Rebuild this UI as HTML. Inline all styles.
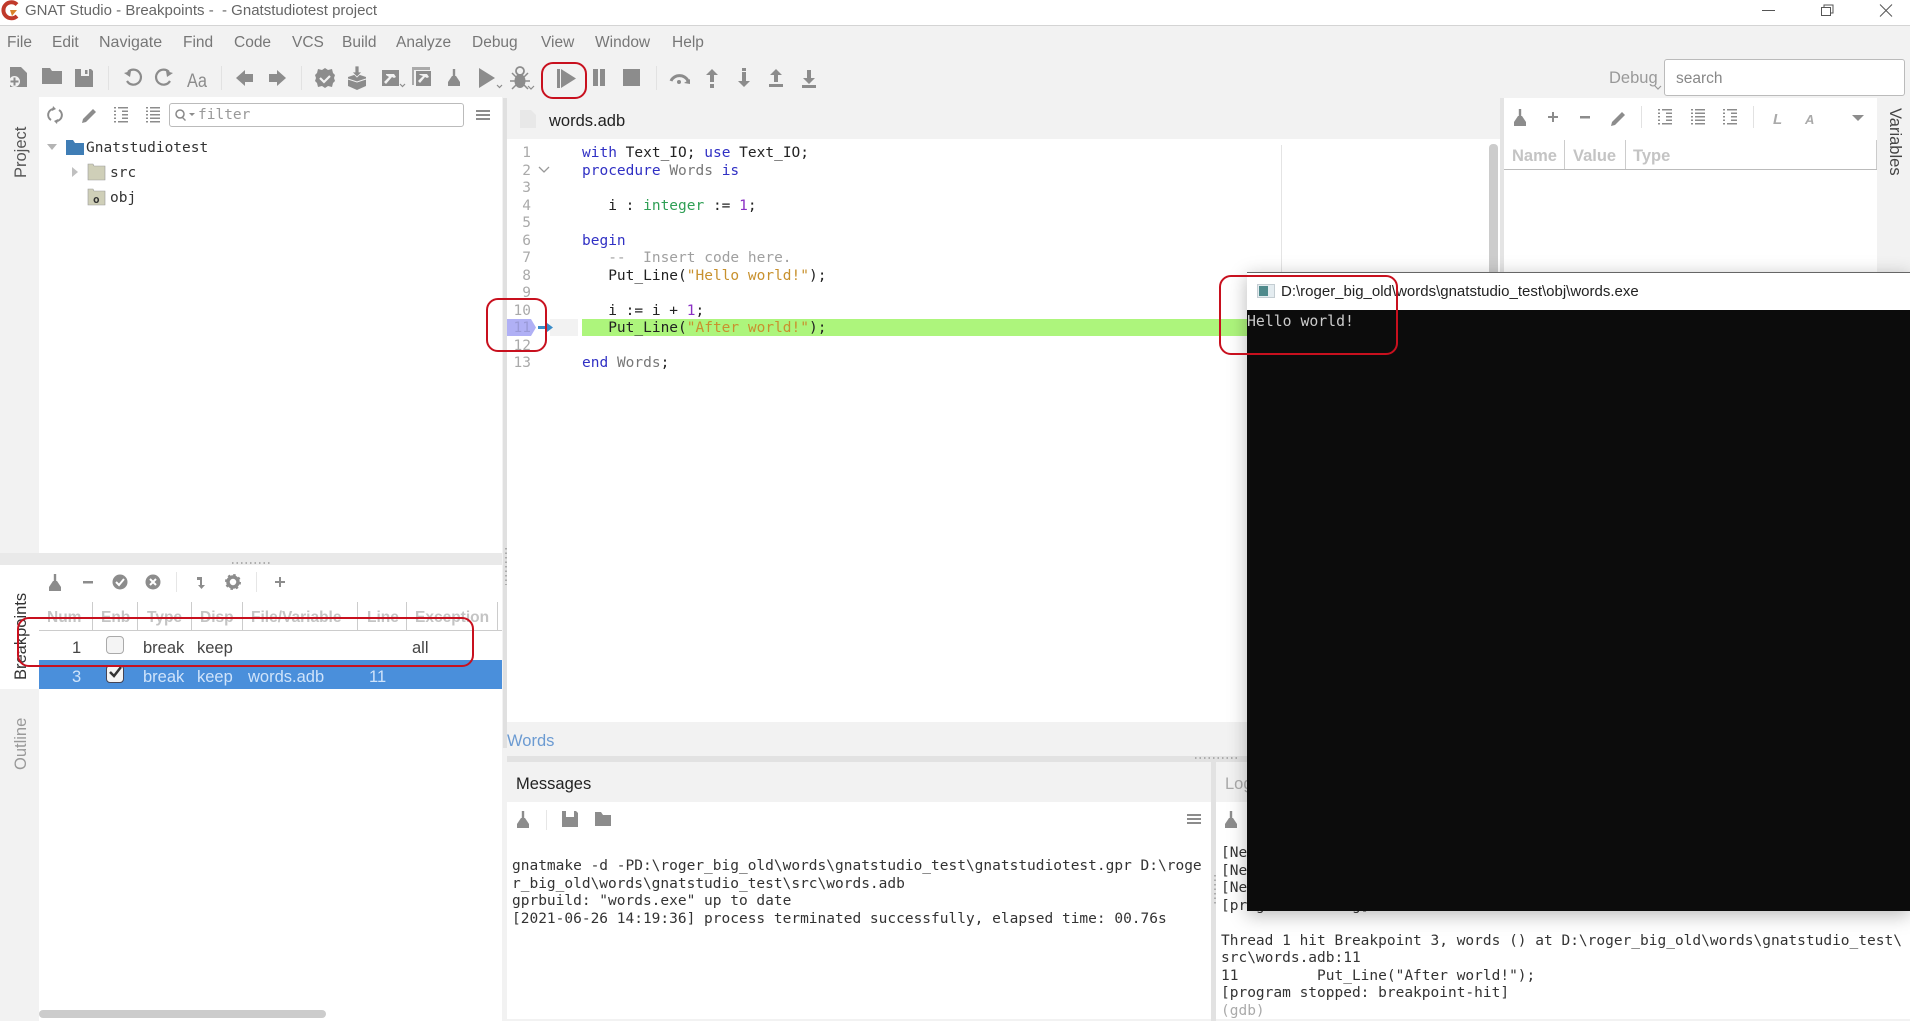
<!DOCTYPE html>
<html><head><meta charset="utf-8"><title>GNAT Studio</title>
<style>
html,body{margin:0;padding:0;background:#f2f2f2;width:1910px;height:1021px;overflow:hidden}
#w{position:relative;width:1910px;height:1021px;overflow:hidden;filter:blur(.35px);font-family:"Liberation Sans",sans-serif}
.b{position:absolute}
.t{position:absolute;white-space:pre;line-height:20px;height:20px;font-size:15.5px;color:#777}
.m{font-family:"DejaVu Sans Mono",monospace;font-size:14.5px;color:#333}
.h{font-weight:bold;font-size:15.5px;color:#c4c4c4}
pre{position:absolute;margin:0;font-family:"DejaVu Sans Mono",monospace;font-size:14.5px;line-height:17.5px;color:#222}
.k{color:#3030c4}.s{color:#c8912e}.n{color:#8a2fc4}.g{color:#2f9f55}.c{color:#a0a0a0}.i{color:#777}
.r{position:absolute;border:2px solid #c8101e;border-radius:12px;box-sizing:border-box}
.v{position:absolute;white-space:pre;line-height:20px;height:20px;font-size:16.5px;transform-origin:0 0}
</style></head><body><div id="w">
<!-- title -->
<div class="b" style="left:0;top:0;width:1910px;height:25px;background:#fff;border-bottom:1px solid #d4d4d4"></div>
<svg class="b" style="left:0;top:0" width="20" height="22" viewBox="0 0 20 22"><path d="M17 4.500A8 8 0 1 0 17 16" fill="none" stroke="#c0392b" stroke-width="4"/><path d="M10 10h7l-5 6z" fill="#d9822b"/></svg>
<div class="t" style="left:25px;top:1px;font-size:15px;color:#666">GNAT Studio - Breakpoints -  - Gnatstudiotest project</div>
<svg class="b" style="left:1750px;top:0" width="160" height="22" fill="none" stroke="#555" stroke-width="1"><path d="M12 10.500h13"/><path d="M71.500 7.500h9v8h-9zM74 7.500v-2.500h9v8h-2.500"/><path d="M130 4.500l12 12M142 4.500l-12 12"/></svg>
<!-- menu -->
<div class="t" style="left:7px;top:33px">File</div>
<div class="t" style="left:52px;top:33px">Edit</div>
<div class="t" style="left:99px;top:33px;font-size:16px">Navigate</div>
<div class="t" style="left:183px;top:33px">Find</div>
<div class="t" style="left:234px;top:33px">Code</div>
<div class="t" style="left:292px;top:33px">VCS</div>
<div class="t" style="left:342px;top:33px">Build</div>
<div class="t" style="left:396px;top:33px">Analyze</div>
<div class="t" style="left:472px;top:33px">Debug</div>
<div class="t" style="left:541px;top:33px">View</div>
<div class="t" style="left:595px;top:33px">Window</div>
<div class="t" style="left:672px;top:33px">Help</div>
<!-- panels -->
<div class="b" style="left:39px;top:97px;width:463px;height:456px;background:#fff"></div>
<div class="b" style="left:0;top:553px;width:502px;height:12px;background:#e9e9e9"></div>
<div class="b" style="left:0;top:565px;width:39px;height:124px;background:#fff"></div>
<div class="b" style="left:39px;top:565px;width:463px;height:456px;background:#fff"></div>
<div class="b" style="left:503px;top:98px;width:4px;height:650px;background:#e0e0e0"></div>
<div class="b" style="left:507px;top:139px;width:993px;height:583px;background:#fff"></div>
<div class="b" style="left:1489px;top:144px;width:9px;height:140px;background:#ccc;border-radius:4px"></div>
<div class="b" style="left:1500px;top:98px;width:4px;height:180px;background:#e4e4e4"></div>
<div class="b" style="left:1504px;top:98px;width:373px;height:180px;background:#fff"></div>
<div class="b" style="left:1281px;top:145px;width:1px;height:130px;background:#e4e4e4"></div>
<div class="b" style="left:507px;top:756px;width:1403px;height:6px;background:#e2e2e2"></div>
<div class="b" style="left:507px;top:802px;width:704px;height:217px;background:#fff"></div>
<div class="b" style="left:1211px;top:762px;width:5px;height:259px;background:#e2e2e2"></div>
<div class="b" style="left:1216px;top:802px;width:694px;height:217px;background:#fff"></div>
<div class="b" style="left:39px;top:1010px;width:287px;height:8px;background:#ccc;border-radius:4px"></div>
<!-- side labels -->
<div class="v" style="left:11px;top:178px;transform:rotate(-90deg);color:#555">Project</div>
<div class="v" style="left:11px;top:680px;transform:rotate(-90deg);color:#333">Breakpoints</div>
<div class="v" style="left:11px;top:770px;transform:rotate(-90deg);color:#999">Outline</div>
<div class="v" style="left:1905px;top:108px;transform:rotate(90deg);color:#444">Variables</div>
<!-- project tree -->
<div class="b" style="left:169px;top:103px;width:295px;height:24px;box-sizing:border-box;background:#fff;border:1px solid #bbb;border-radius:3px"></div>
<div class="t m" style="left:198px;top:105px;color:#999">filter</div>
<div class="t m" style="left:86px;top:138px">Gnatstudiotest</div>
<div class="t m" style="left:110px;top:163px">src</div>
<div class="t m" style="left:110px;top:188px">obj</div>
<!-- editor -->
<div class="t" style="left:549px;top:111px;font-size:16.5px;color:#222">words.adb</div>
<div class="b" style="left:582px;top:319px;width:665px;height:17px;background:#adf57c"></div>
<div class="b" style="left:550px;top:319px;width:28px;height:17px;background:#f2f2f2"></div>
<svg class="b" style="left:507px;top:319px" width="46" height="17"><path d="M0 0h24l5 8.500-5 8.500H0z" fill="#b0b0f5"/><path d="M31 7h13v3H31z" fill="#3a8cc8"/><path d="M40 4l6 4.500-6 4.500z" fill="#3a8cc8"/></svg>
<pre style="left:507px;top:145px;width:24px;text-align:right;color:#aaa">1
2
3
4
5
6
7
8
9
10
<span style="color:#9a9ad8">11</span>
12
13</pre>
<svg class="b" style="left:538px;top:165px" width="12" height="10" fill="none" stroke="#999" stroke-width="1.300"><path d="M1 2l5 5 5-5"/></svg>
<pre style="left:582px;top:145px"><span class="k">with</span> Text_IO; <span class="k">use</span> Text_IO;
<span class="k">procedure</span> <span class="i">Words</span> <span class="k">is</span>

   i : <span class="g">integer</span> := <span class="n">1</span>;

<span class="k">begin</span>
   <span class="c">--  Insert code here.</span>
   Put_Line(<span class="s">"Hello world!"</span>);

   i := i + <span class="n">1</span>;
   Put_Line(<span class="s">"After world!"</span>);

<span class="k">end</span> <span class="i">Words</span>;</pre>
<!-- right -->
<div class="t" style="left:1609px;top:68px;font-size:16.500px;color:#999">Debug</div>
<div class="b" style="left:1664px;top:59px;width:241px;height:37px;box-sizing:border-box;background:#fff;border:1px solid #bbb;border-radius:3px"></div>
<div class="t" style="left:1676px;top:69px;font-size:15.500px;color:#888">search</div>
<div class="t h" style="left:1512px;top:146px;font-size:16.500px">Name</div>
<div class="t h" style="left:1573px;top:146px;font-size:16.500px">Value</div>
<div class="t h" style="left:1633px;top:146px;font-size:16.500px">Type</div>
<div class="b" style="left:1504px;top:169px;width:373px;height:1px;background:#bbb"></div>
<div class="b" style="left:1564px;top:140px;width:1px;height:29px;background:#ccc"></div>
<div class="b" style="left:1625px;top:140px;width:1px;height:29px;background:#ccc"></div>
<div class="b" style="left:1876px;top:140px;width:1px;height:29px;background:#ccc"></div>
<!-- breakpoints -->
<div class="t h" style="left:47px;top:608px">Num</div>
<div class="t h" style="left:101px;top:608px">Enb</div>
<div class="t h" style="left:147px;top:608px">Type</div>
<div class="t h" style="left:200px;top:608px">Disp</div>
<div class="t h" style="left:251px;top:608px">File/Variable</div>
<div class="t h" style="left:367px;top:608px">Line</div>
<div class="t h" style="left:415px;top:608px">Exception</div>
<div class="b" style="left:39px;top:630px;width:463px;height:1px;background:#ccc"></div>
<div class="b" style="left:92px;top:602px;width:1px;height:28px;background:#ccc"></div>
<div class="b" style="left:137px;top:602px;width:1px;height:28px;background:#ccc"></div>
<div class="b" style="left:191px;top:602px;width:1px;height:28px;background:#ccc"></div>
<div class="b" style="left:242px;top:602px;width:1px;height:28px;background:#ccc"></div>
<div class="b" style="left:357px;top:602px;width:1px;height:28px;background:#ccc"></div>
<div class="b" style="left:406px;top:602px;width:1px;height:28px;background:#ccc"></div>
<div class="b" style="left:497px;top:602px;width:1px;height:28px;background:#ccc"></div>
<div class="b" style="left:39px;top:660px;width:463px;height:29px;background:#4a8fdb"></div>
<div class="t" style="left:72px;top:638px;font-size:16.500px;color:#444">1</div>
<div class="t" style="left:143px;top:638px;font-size:16.500px;color:#444">break</div>
<div class="t" style="left:197px;top:638px;font-size:16.500px;color:#444">keep</div>
<div class="t" style="left:412px;top:638px;font-size:16.500px;color:#444">all</div>
<div class="b" style="left:106px;top:636px;width:18px;height:18px;box-sizing:border-box;background:#f4f4f4;border:1px solid #aaa;border-radius:4px"></div>
<div class="t" style="left:72px;top:667px;font-size:16.500px;color:#cfe3fa">3</div>
<div class="t" style="left:143px;top:667px;font-size:16.500px;color:#cfe3fa">break</div>
<div class="t" style="left:197px;top:667px;font-size:16.500px;color:#cfe3fa">keep</div>
<div class="t" style="left:248px;top:667px;font-size:16.500px;color:#cfe3fa">words.adb</div>
<div class="t" style="left:369px;top:667px;font-size:16.500px;color:#cfe3fa">11</div>
<div class="b" style="left:106px;top:665px;width:18px;height:18px;box-sizing:border-box;background:#f4f4f4;border:1px solid #445;border-radius:4px"></div>
<svg class="b" style="left:106px;top:663px" width="18" height="18" fill="none" stroke="#333" stroke-width="2.500"><path d="M4 9l4 4 7-9"/></svg>
<!-- bottom -->
<div class="t" style="left:507px;top:731px;font-size:16.500px;color:#6c9bd2">Words</div>
<div class="t" style="left:516px;top:774px;font-size:16.500px;color:#222">Messages</div>
<div class="t" style="left:1225px;top:774px;font-size:16.500px;color:#aaa">Log</div>
<pre style="left:512px;top:858px;color:#333">gnatmake -d -PD:\roger_big_old\words\gnatstudio_test\gnatstudiotest.gpr D:\roge
r_big_old\words\gnatstudio_test\src\words.adb
gprbuild: "words.exe" up to date
[2021-06-26 14:19:36] process terminated successfully, elapsed time: 00.76s</pre>
<pre style="left:1221px;top:845px;color:#333">[New
[New
[New
[program running]

Thread 1 hit Breakpoint 3, words () at D:\roger_big_old\words\gnatstudio_test\
src\words.adb:11
11         Put_Line("After world!");
[program stopped: breakpoint-hit]
<span style="color:#aaa">(gdb)</span></pre>
<!-- icons -->
<svg class="b" style="left:0;top:0" width="1910" height="1021" fill="#8c8c8c">
<defs>
<g id="br"><rect x="-1.200" y="-9" width="2.400" height="8"/><path d="M-2-2h4l4 6v4h-12V4z"/></g>
<g id="ln"><path d="M-7-7h2v1.500h-2zM-7-3.500h2v1.500h-2zM-7 0h2v1.500h-2zM-7 3.500h2v1.500h-2zM-7 7h2v1.500h-2zM-3-7H7v1.500H-3zM-3-3.500H7v1.500H-3zM-3 0H7v1.500H-3zM-3 3.500H7v1.500H-3zM-3 7H7v1.500H-3z"/></g>
<g id="li"><path d="M-7-7h2v1.500h-2zM-7-3.500h2v1.500h-2zM-7 0h2v1.500h-2zM-7 3.500h2v1.500h-2zM-7 7h2v1.500h-2zM-3-7H7v1.500H-3zM1-3.500H7v1.500H1zM1 0H7v1.500H1zM1 3.500H7v1.500H1zM-3 7H7v1.500H-3z"/></g>
<g id="mn"><path d="M-7-5H7v2H-7zM-7-1H7v2H-7zM-7 3H7v2H-7z"/></g>
<g id="fo"><path d="M-10-8h7l2 3H10V8H-10z"/></g>
<g id="sv"><path d="M-9-9H7l2 2V9H-9z"/><path d="M-3-9H5v7H-3z" fill="#f2f2f2"/><path d="M1-8h2.500v4H1z"/></g>
</defs>
<!-- main toolbar -->
<path d="M10 67h11l6 6v14H10z"/><circle cx="14.500" cy="81.500" r="5.500" fill="#f2f2f2"/><path d="M13.500 77.500h2v3h3v2h-3v3h-2v-3h-3v-2h3z"/>
<path d="M42 68h8l2 3h10v13H42z"/>
<use href="#sv" x="84" y="78"/>
<rect x="108" y="66" width="1" height="24" fill="#e2e2e2"/><rect x="221" y="66" width="1" height="24" fill="#e2e2e2"/><rect x="301" y="66" width="1" height="24" fill="#e2e2e2"/>
<g fill="none" stroke="#8c8c8c" stroke-width="2.200"><path d="M128 72a7.500 7.500 0 1 1-1 9"/><path d="M169 72a7.500 7.500 0 1 0 1 9"/></g>
<path d="M124 73l7-2-1 6zM173 73l-7-2 1 6z"/>
<text x="187" y="87" font-family="Liberation Sans,sans-serif" font-size="19" textLength="20" lengthAdjust="spacingAndGlyphs" fill="#8c8c8c">Aa</text>
<path d="M236 78l9-8v4h8v8h-8v4zM286 78l-9-8v4h-8v8h8v4z"/>
<path d="M325 68l3 2 4-1 1 4 2 2-1 3 1 3-2 2-1 4-4-1-3 2-3-2-4 1-1-4-2-2 1-3-1-3 2-2 1-4 4 1z"/><path d="M320 78l4 4 6-6" fill="none" stroke="#f2f2f2" stroke-width="2.200"/>
<path d="M348 77l9-3 9 3v9l-9 4-9-4z"/><path d="M355 66h4v6h3l-5 5-5-5h3z" stroke="#f2f2f2" stroke-width=".8"/><path d="M348 79l9 3 9-3" fill="none" stroke="#f2f2f2"/>
<path d="M382 70h17v16h-17z"/><path d="M386 74h8l2 3-2 1-2-1-6 7-2-2 5-5-3-2z" fill="#f2f2f2"/><path d="M400 84l2.500 2.500 2.500-2.500" fill="none" stroke="#8c8c8c" stroke-width="1.200"/>
<path d="M412 67h18v3h-18z" fill="#aaa"/><path d="M412 67h2v18h-2z" fill="#aaa"/><path d="M416 71h15v15h-15z"/><path d="M419 74h8l2 3-2 1-2-1-5 6-2-2 5-5-3-1z" fill="#f2f2f2"/>
<use href="#br" x="454" y="78"/>
<path d="M479 68l16 10-16 10z"/><path d="M497 85l2.500 2.500 2.500-2.500" fill="none" stroke="#8c8c8c" stroke-width="1.200"/>
<ellipse cx="520" cy="81" rx="5.500" ry="7"/><circle cx="520" cy="71" r="4" fill="none" stroke="#8c8c8c" stroke-width="1.800"/><path d="M512 73l4 4M528 73l-4 4M510 81h5M525 81h5M512 89l4-4M528 89l-4-4" stroke="#8c8c8c" stroke-width="1.500"/><path d="M528 86l3 3 3-3" fill="none" stroke="#8c8c8c" stroke-width="1.200"/>
<path d="M557 69h3v19h-3zM561 69l15 9.500-15 9.500z"/>
<path d="M593 69h5v17h-5zM600 69h5v17h-5z"/><path d="M623 69h17v17h-17z"/>
<rect x="656" y="66" width="1" height="24" fill="#e2e2e2"/>
<path d="M671 81a9 8 0 0 1 17 0" fill="none" stroke="#8c8c8c" stroke-width="3"/><circle cx="679" cy="82" r="2"/><path d="M684 83l6-4 0 5z"/>
<path d="M712 69l6 6h-4v7h-4v-7h-4zM710 84h4v4h-4z"/><path d="M744 86l-6-6h4v-9h4v9h4zM742 67h4v3h-4z" transform="translate(0 1)"/>
<path d="M776 69l6 6h-4v7h-4v-7h-4zM769 84h14v3h-14z"/><path d="M809 84l-6-6h4v-8h4v8h4zM802 85h14v3h-14z"/>
<!-- project toolbar -->
<g fill="none" stroke="#8c8c8c" stroke-width="2"><path d="M53 109a6 6 0 0 0-2 11M57 121a6 6 0 0 0 2-11"/></g>
<path d="M53 106l3 3-4 2zM57 124l-3-3 4-2z"/>
<path d="M83 119l10-10 3 3-10 10-4 1z"/>
<use href="#li" x="121" y="114"/><use href="#ln" x="153" y="114"/>
<circle cx="180" cy="114" r="4" fill="none" stroke="#888" stroke-width="1.500"/><path d="M183 117l3 3-1 1-3-3zM189 113h6l-3 3z"/>
<use href="#mn" x="483" y="115"/>
<!-- tree -->
<path d="M47 144h10l-5 6z" fill="#b4b4b4"/>
<path d="M66 140h7l2 3h9v12H66z" fill="#3f7db5"/>
<path d="M72 167l6 5-6 5z" fill="#c0c0c0"/>
<path d="M88 164h5l1 2h11v14H88z" fill="#cfcfb8" stroke="#999" stroke-width=".6"/>
<path d="M88 189h5l1 2h11v14H88z" fill="#cfcfb8" stroke="#999" stroke-width=".6"/>
<text x="93" y="203" font-family="DejaVu Sans Mono,monospace" font-size="11" font-weight="bold" fill="#333">o</text>
<!-- file icon -->
<path d="M520 110h11l5 5v13h-16z" fill="#e8e8e8"/>
<!-- variables toolbar -->
<use href="#br" x="1520" y="118"/>
<path d="M1548 116h4v-4h2v4h4v2h-4v4h-2v-4h-4zM1580 116h10v2.500h-10z"/>
<path d="M1612 122l10-10 3 3-10 10-4 1z"/>
<rect x="1641" y="106" width="1" height="22" fill="#e2e2e2"/><rect x="1753" y="106" width="1" height="22" fill="#e2e2e2"/>
<use href="#li" x="1665" y="116"/><use href="#ln" x="1698" y="116"/><use href="#li" x="1730" y="116"/>
<text x="1773" y="124" font-family="Liberation Sans,sans-serif" font-size="15" font-style="italic" font-weight="bold" fill="#aaa">L</text>
<text x="1805" y="124" font-family="Liberation Sans,sans-serif" font-size="13" font-style="italic" font-weight="bold" fill="#aaa">A</text>
<path d="M1852 115h12l-6 6z"/>
<path d="M1655 86l3 3 3-3" fill="none" stroke="#999" stroke-width="1.200"/>
<!-- breakpoints toolbar -->
<use href="#br" x="55" y="583"/>
<path d="M83 581h10v2.500h-10z"/>
<circle cx="120" cy="582" r="7.500"/><path d="M116 582l3 3 5-6" fill="none" stroke="#fff" stroke-width="2"/>
<circle cx="153" cy="582" r="7.500"/><path d="M150 579l6 6M156 579l-6 6" fill="none" stroke="#fff" stroke-width="2"/>
<rect x="176" y="572" width="1" height="20" fill="#e6e6e6"/><rect x="256" y="572" width="1" height="20" fill="#e6e6e6"/>
<path d="M197 577l5 0v8h3l-3.500 4-3.500-4h2v-5h-3z"/>
<circle cx="233" cy="582" r="5" fill="none" stroke="#8c8c8c" stroke-width="3.500" /><circle cx="233" cy="582" r="7" fill="none" stroke="#8c8c8c" stroke-width="2" stroke-dasharray="2.500 3"/>
<path d="M275 581h4v-4h2v4h4v2h-4v4h-2v-4h-4z"/>
<!-- messages toolbar -->
<use href="#br" x="523" y="820"/><path d="M562 811H576l2 2V827H562z"/><path d="M566 811h8v6h-8z" fill="#fff"/>
<path d="M595 812h6l2 3h8v11H595z"/>
<use href="#mn" x="1194" y="819"/>
<use href="#br" x="1231" y="820"/>
<rect x="546" y="810" width="1" height="20" fill="#e6e6e6"/>
<!-- dots -->
<g fill="none" stroke="#999" stroke-width="1.500" stroke-dasharray="1.500 3"><path d="M232 563H272M1195 758H1240M506 548V585M1215 875V905"/></g>
</svg>
<!-- console -->
<div class="b" style="left:1247px;top:272px;width:663px;height:639px;background:#0c0c0c;border-top:1px solid #666;box-sizing:border-box;box-shadow:0 4px 18px rgba(0,0,0,.28)"></div>
<div class="b" style="left:1247px;top:273px;width:663px;height:37px;background:#fff"></div>
<svg class="b" style="left:1257px;top:284px" width="18" height="14"><path d="M0 0h18v14H0z" fill="#c4cdd2"/><path d="M1 1h16v12H1z" fill="#e4ecf0"/><path d="M2 2h9v10H2z" fill="#4f8a8c"/></svg>
<div class="t" style="left:1281px;top:282px;font-size:15px;color:#222">D:\roger_big_old\words\gnatstudio_test\obj\words.exe</div>
<div class="t m" style="left:1247px;top:312px;font-size:14.800px;color:#ccc">Hello world!</div>
<!-- annotations -->
<div class="r" style="left:541px;top:62px;width:46px;height:37px"></div>
<div class="r" style="left:486px;top:298px;width:61px;height:54px"></div>
<div class="r" style="left:1219px;top:275px;width:179px;height:80px"></div>
<div class="r" style="left:17px;top:617px;width:457px;height:50px"></div>
</div></body></html>
